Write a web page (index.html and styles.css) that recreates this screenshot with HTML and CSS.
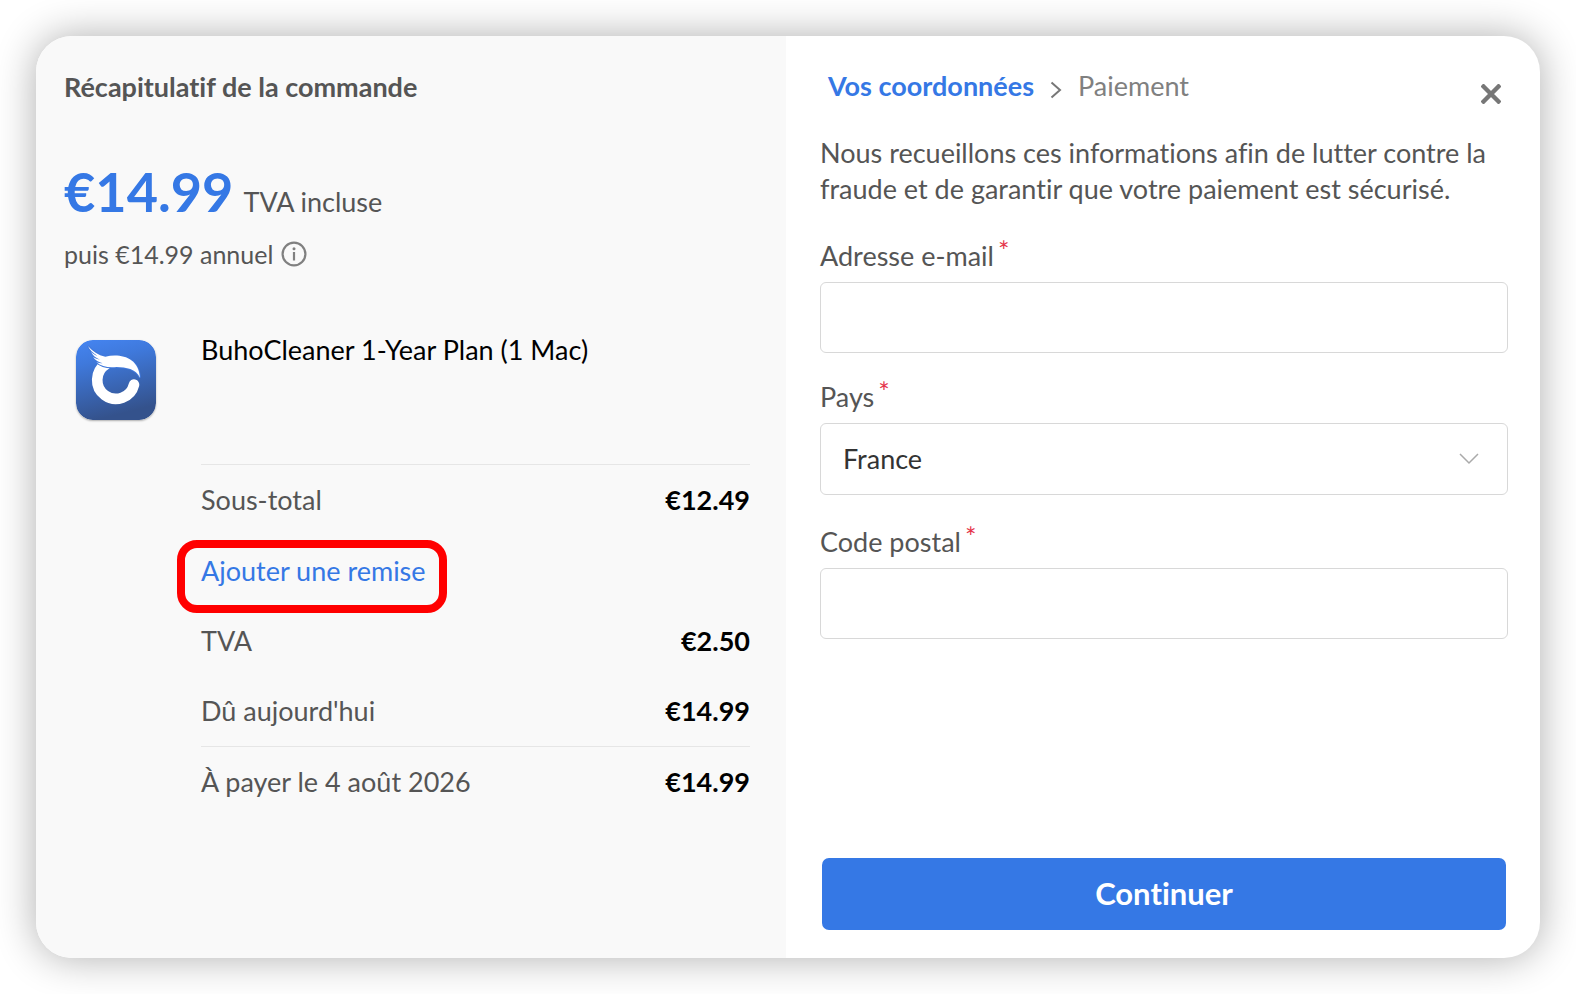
FILE: index.html
```html
<!DOCTYPE html>
<html lang="fr">
<head>
<meta charset="utf-8">
<meta name="viewport" content="width=device-width, initial-scale=1">
<title>Commande</title>
<link rel="stylesheet" href="styles.css">
</head>
<body>
<main class="checkout">
  <section class="summary">
    <h1 class="summary-title">Récapitulatif de la commande</h1>
    <p class="price"><strong class="price-amount">€14.99</strong><span class="price-note">TVA incluse</span></p>
    <p class="renewal">
      <span>puis €14.99 annuel</span>
      <svg class="info-icon" viewBox="0 0 26 26" aria-hidden="true">
        <circle cx="13" cy="13" r="11.4" fill="none" stroke="currentColor" stroke-width="2.2"/>
        <circle cx="13" cy="7.8" r="1.5" fill="currentColor"/>
        <path d="M13 11v8.5" stroke="currentColor" stroke-width="2.2"/>
      </svg>
    </p>
    <div class="order">
      <svg class="product-icon" viewBox="0 0 240 240" aria-hidden="true">
        <defs>
          <linearGradient id="tile" x1="0" y1="0" x2="0.25" y2="1">
            <stop offset="0" stop-color="#4585f2"/>
            <stop offset="0.3" stop-color="#3f79dc"/>
            <stop offset="1" stop-color="#34528c"/>
          </linearGradient>
        </defs>
        <rect width="240" height="240" rx="50" fill="url(#tile)"/>
        <path d="M90 73A56 56 0 1 0 174 134" fill="none" stroke="#fff" stroke-width="32" stroke-linecap="round"/>
        <path d="M36 18C50 34 66 46 88 50C134 40 188 52 192 113C180 86 150 82 122 81C98 84 76 80 61 66C68 69 74 70 80 70C68 66 58 61 51 51C58 56 65 58 72 59C58 52 49 45 45 35C51 41 57 45 64 47C50 39 41 30 36 18Z" fill="#fff" stroke="#4079dc" stroke-width="6" paint-order="stroke"/>
      </svg>
      <div class="order-details">
        <h2 class="product-name">BuhoCleaner 1-Year Plan (1 Mac)</h2>
        <dl class="totals">
          <div class="totals-row"><dt>Sous-total</dt><dd>€12.49</dd></div>
          <div class="totals-row totals-discount"><dt><a class="discount-link" href="#remise">Ajouter une remise</a></dt></div>
          <div class="totals-row"><dt>TVA</dt><dd>€2.50</dd></div>
          <div class="totals-row"><dt>Dû aujourd'hui</dt><dd>€14.99</dd></div>
        </dl>
        <dl class="totals">
          <div class="totals-row"><dt>À payer le 4 août 2026</dt><dd>€14.99</dd></div>
        </dl>
      </div>
    </div>
  </section>
  <form class="details">
    <header class="details-header">
      <ol class="steps">
        <li class="step step-current" aria-current="step">Vos coordonnées</li>
        <li class="step-separator" aria-hidden="true">
          <svg class="step-icon" viewBox="0 0 12 18"><path d="M1.5 1.5L10 9L1.5 16.5" fill="none" stroke="currentColor" stroke-width="2"/></svg>
        </li>
        <li class="step">Paiement</li>
      </ol>
      <button class="close" type="button" aria-label="Fermer">
        <svg class="close-icon" viewBox="0 0 20 20" aria-hidden="true"><path d="M2.5 2.5L17.5 17.5M17.5 2.5L2.5 17.5" stroke="currentColor" stroke-width="4.4" stroke-linecap="square" stroke-linejoin="round"/></svg>
      </button>
    </header>
    <p class="intro">Nous recueillons ces informations afin de lutter contre la fraude et de garantir que votre paiement est sécurisé.</p>
    <div class="field">
      <label class="label" for="email">Adresse e-mail<span class="required">*</span></label>
      <input class="control" id="email" type="email">
    </div>
    <div class="field field-country">
      <label class="label" for="country">Pays<span class="required">*</span></label>
      <div class="select">
        <select class="control" id="country"><option>France</option></select>
        <svg class="select-icon" viewBox="0 0 20 12" aria-hidden="true"><path d="M1 1L10 10L19 1" fill="none" stroke="currentColor" stroke-width="1.5"/></svg>
      </div>
    </div>
    <div class="field">
      <label class="label" for="postcode">Code postal<span class="required">*</span></label>
      <input class="control" id="postcode" type="text">
    </div>
    <button class="submit" type="submit">Continuer</button>
  </form>
</main>
</body>
</html>
```
FILE: styles.css
```css
* {
  box-sizing: border-box;
}

body {
  margin: 0;
  padding: 36px;
  min-height: 100vh;
  display: flex;
  background: #fff;
  color: #555;
  font: 27px/36px Lato, "Liberation Sans", sans-serif;
  font-variant-ligatures: none;
}

h1, h2, p, dl, dd, ol {
  margin: 0;
  padding: 0;
}

.checkout {
  flex: 1;
  display: grid;
  grid-template-columns: 750fr 754fr;
  border-radius: 36px;
  background: #fff;
  box-shadow: 0 0 40px rgba(0, 0, 0, 0.32);
}

.summary {
  padding: 33px 36px 32px 28px;
  border-radius: 36px 0 0 36px;
  background: #f9f9f9;
}

.summary-title {
  font-size: 27px;
  font-weight: 700;
}

.price {
  display: flex;
  align-items: baseline;
  gap: 10px;
  margin-top: 53px;
}

.price-amount {
  color: #3578e5;
  font-size: 54px;
  line-height: 68px;
}

.renewal {
  display: flex;
  align-items: center;
  gap: 8px;
  margin-top: 10px;
  font-size: 25px;
}

.info-icon {
  width: 26px;
  height: 26px;
  color: #808080;
}

.order {
  display: grid;
  grid-template-columns: 80px 1fr;
  column-gap: 45px;
  margin-top: 60px;
  padding-left: 12px;
}

.product-icon {
  width: 80px;
  height: 80px;
  margin-top: 8px;
  border-radius: 17px;
  box-shadow: 0 1px 2px rgba(0, 0, 0, 0.3);
}

.product-name {
  margin-bottom: 96px;
  color: #000;
  font-size: 27px;
  font-weight: 400;
}

.totals {
  display: flex;
  flex-direction: column;
  gap: 34px;
  padding: 17px 0;
  border-top: 1px solid #e6e6e6;
}

.totals-row {
  display: flex;
  justify-content: space-between;
}

.totals-row dd {
  color: #000;
  font-weight: 700;
}

.totals-discount {
  position: relative;
  align-self: flex-start;
  padding-top: 1px;
}

.totals-discount::after {
  content: "";
  position: absolute;
  inset: -12px -21px -24px -24px;
  border: 8px solid #f00;
  border-radius: 20px;
  pointer-events: none;
}

.discount-link {
  color: #3578e5;
  text-decoration: none;
}

.details {
  display: flex;
  flex-direction: column;
  padding: 32px 32px 28px 34px;
}

.details-header {
  display: flex;
  justify-content: space-between;
  align-items: flex-start;
  padding: 0 7px 0 8px;
}

.steps {
  display: flex;
  align-items: center;
  gap: 16px;
  list-style: none;
}

.step {
  color: #808080;
}

.step-current {
  color: #3578e5;
  font-weight: 700;
}

.step-separator {
  display: flex;
  padding-top: 8px;
  color: #777;
}

.step-icon {
  width: 12px;
  height: 18px;
}

.close {
  display: flex;
  margin-top: 16px;
  padding: 0;
  border: 0;
  background: none;
  color: #777;
  cursor: pointer;
}

.close-icon {
  width: 20px;
  height: 20px;
}

.intro {
  margin-top: 31px;
}

.field {
  display: flex;
  flex-direction: column;
  gap: 8px;
  margin-top: 29px;
}

.intro + .field {
  margin-top: 31px;
}

.field-country {
  margin-top: 26px;
}

.label {
  display: flex;
}

.required {
  margin-left: 4px;
  color: #e5354b;
  font-size: 27px;
  line-height: 26px;
}

.control {
  width: 100%;
  height: 71px;
  padding: 0 22px;
  border: 1px solid #d8d8d8;
  border-radius: 6px;
  background: #fff;
  color: #333;
  font: inherit;
  appearance: none;
}

.select {
  position: relative;
  display: flex;
}

.select .control {
  height: 72px;
}

.select-icon {
  position: absolute;
  top: 50%;
  right: 29px;
  width: 20px;
  height: 12px;
  margin-top: -6px;
  color: #aaa;
  pointer-events: none;
}

.submit {
  margin: auto 2px 0;
  height: 72px;
  padding: 0 0 2px;
  border: 0;
  border-radius: 7px;
  background: #3578e5;
  color: #fff;
  font: 700 31px/36px Lato, "Liberation Sans", sans-serif;
  font-variant-ligatures: none;
  cursor: pointer;
}
```
